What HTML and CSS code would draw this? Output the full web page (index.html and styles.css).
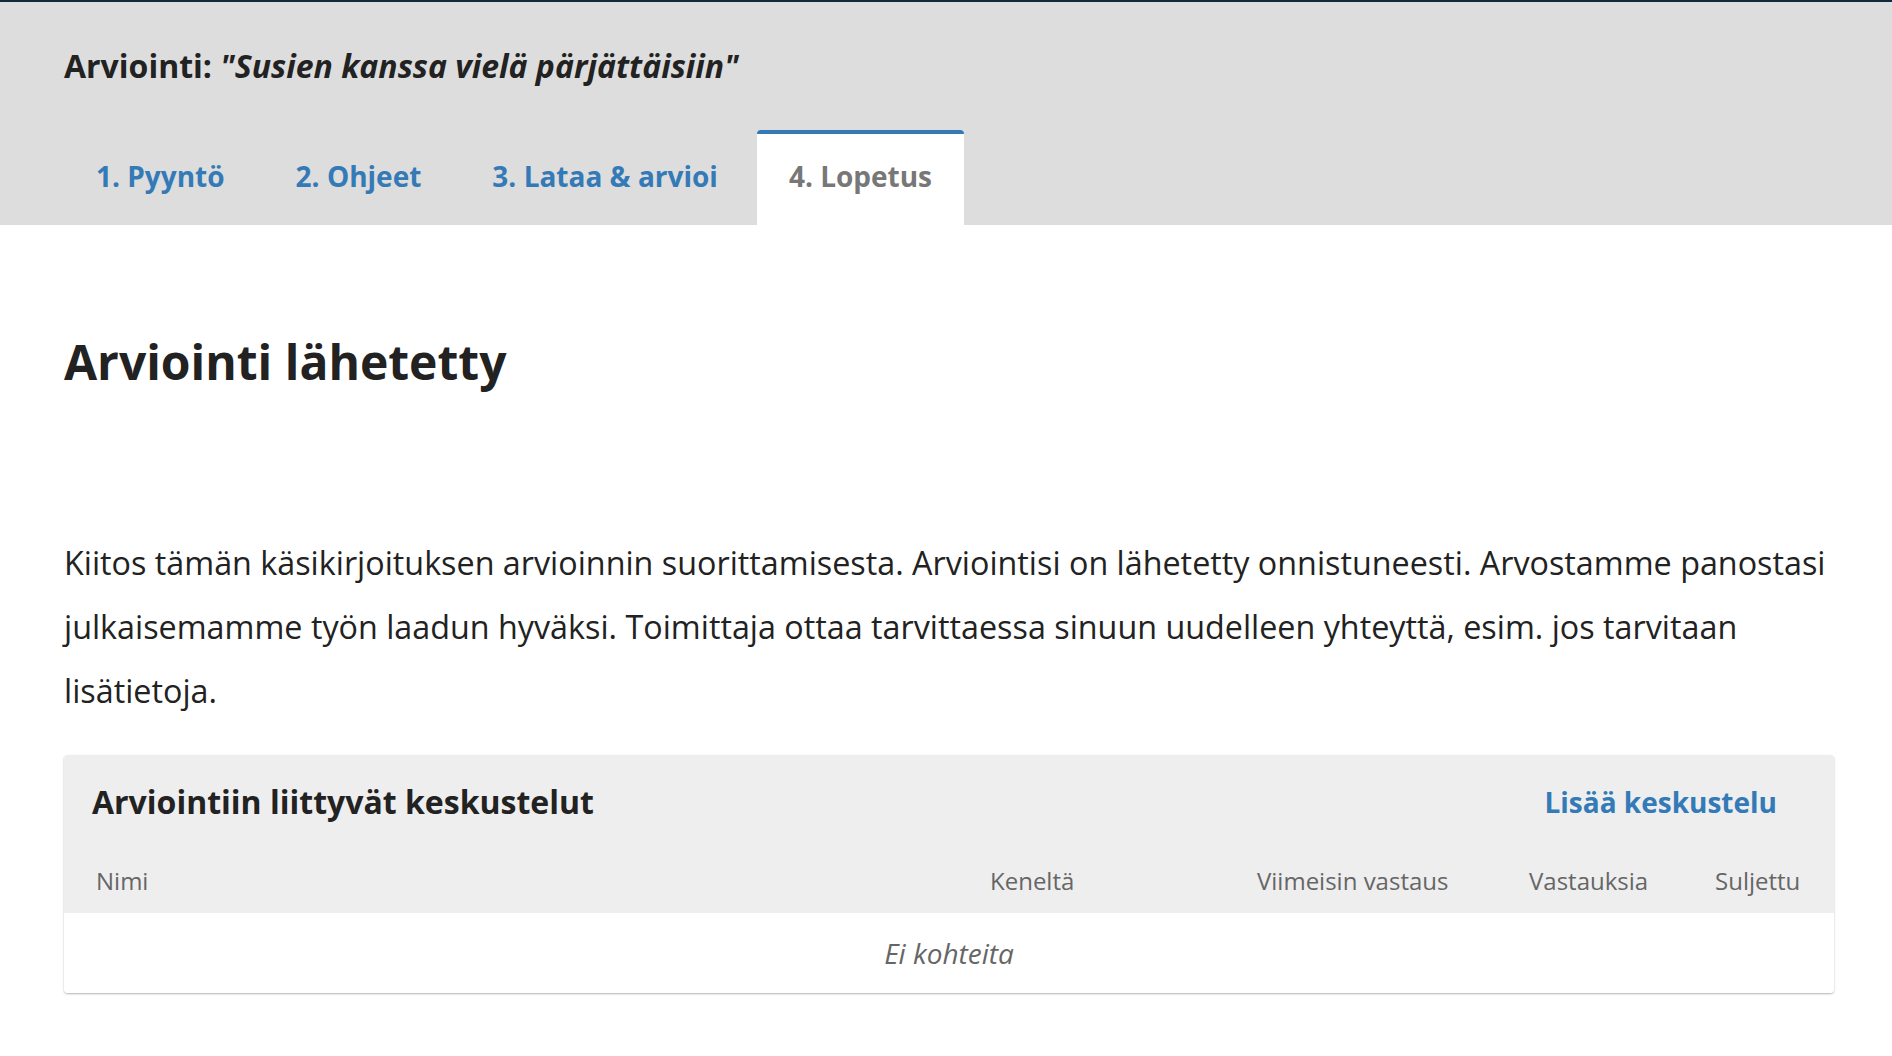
FILE: index.html
```html
<!DOCTYPE html>
<html lang="fi">
<head>
<meta charset="utf-8">
<title>Arviointi</title>
<link rel="stylesheet" href="styles.css">
</head>
<body>
<header class="page-header">
  <h1 class="page-title">Arviointi: <em>"Susien kanssa vielä pärjättäisiin"</em></h1>
  <nav class="tabs">
    <a class="tab" href="#">1. Pyyntö</a>
    <a class="tab" href="#">2. Ohjeet</a>
    <a class="tab" href="#">3. Lataa &amp; arvioi</a>
    <a class="tab tab-active" href="#">4. Lopetus</a>
  </nav>
</header>
<main class="content">
  <h2 class="heading">Arviointi lähetetty</h2>
  <p class="lead">Kiitos tämän käsikirjoituksen arvioinnin suorittamisesta. Arviointisi on lähetetty onnistuneesti. Arvostamme panostasi julkaisemamme työn laadun hyväksi. Toimittaja ottaa tarvittaessa sinuun uudelleen yhteyttä, esim. jos tarvitaan lisätietoja.</p>
  <section class="card">
    <div class="card-head">
      <div class="card-top">
        <h3 class="card-title">Arviointiin liittyvät keskustelut</h3>
        <a class="card-link" href="#">Lisää keskustelu</a>
      </div>
      <div class="cols">
        <span>Nimi</span>
        <span>Keneltä</span>
        <span>Viimeisin vastaus</span>
        <span>Vastauksia</span>
        <span>Suljettu</span>
      </div>
    </div>
    <div class="card-body">Ei kohteita</div>
  </section>
</main>
</body>
</html>
```

FILE: styles.css
```css
html, body {
  margin: 0;
  padding: 0;
  background: #fff;
  font-family: "Open Sans", "Noto Sans", sans-serif;
  color: #222;
}

.page-header {
  background: #ddd;
  border-top: 2px solid #12283f;
  padding: 0 58px 0 64px;
}

.page-title {
  margin: 0;
  padding-top: 40px;
  font-size: 32px;
  line-height: 48px;
  font-weight: 700;
  color: #222;
}

.page-title em {
  font-style: italic;
}

.tabs {
  display: flex;
  gap: 7px;
  margin-top: 40px;
}

.tab {
  display: block;
  padding: 20px 32px 27px;
  border-top: 4px solid transparent;
  border-radius: 4px 4px 0 0;
  font-size: 28px;
  line-height: 44px;
  font-weight: 700;
  color: #337ab7;
  text-decoration: none;
}

.tab-active {
  background: #fff;
  border-top-color: #337ab7;
  color: #777;
}

.content {
  padding: 0 58px 40px 64px;
}

.heading {
  margin: 107px 0 0;
  font-size: 48px;
  line-height: 60px;
  font-weight: 700;
  color: #222;
}

.lead {
  margin: 138px 0 0;
  font-size: 32.3px;
  line-height: 64px;
  color: #222;
}

.card {
  margin-top: 33px;
  border-radius: 4px;
  box-shadow: 0 1px 2px rgba(0, 0, 0, 0.3);
  overflow: hidden;
}

.card-head {
  background: #eee;
  padding: 27px 34px 16px 32px;
}

.card-top {
  display: flex;
  justify-content: space-between;
  align-items: center;
  padding-right: 23px;
}

.card-title {
  margin: 0 0 0 -4px;
  font-size: 32px;
  line-height: 40px;
  font-weight: 700;
  color: #222;
}

.card-link {
  font-size: 28px;
  line-height: 40px;
  font-weight: 700;
  color: #337ab7;
  text-decoration: none;
}

.cols {
  display: grid;
  grid-template-columns: 894px 267px 272px 186px 1fr;
  margin-top: 43px;
  font-size: 24px;
  line-height: 32px;
  color: #666;
}

.card-body {
  background: #fff;
  height: 80px;
  display: flex;
  align-items: center;
  justify-content: center;
  font-size: 28px;
  font-style: italic;
  color: #666;
}
```
